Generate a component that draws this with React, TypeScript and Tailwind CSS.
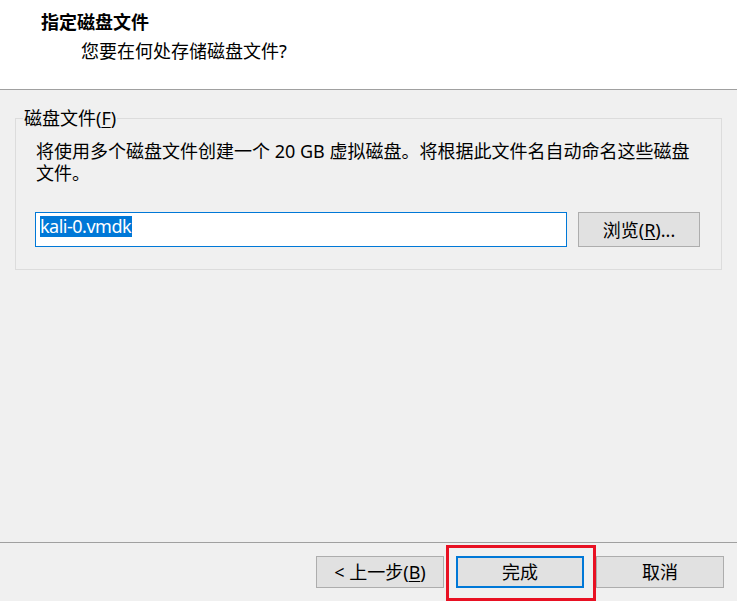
const FONT = "font-['Noto_Sans','Noto_Sans_CJK_SC',sans-serif]"

function Btn({ children, primary = false }: { children: React.ReactNode; primary?: boolean }) {
  return (
    <div
      className={
        'w-[128px] h-[32px] flex items-center justify-center bg-[#e1e1e1] text-[18px] leading-[22px] text-black ' +
        (primary ? 'border-2 border-[#0078d7]' : 'border border-[#adadad]')
      }
    >
      {children}
    </div>
  )
}

export default function App() {
  return (
    <div className={`relative w-[737px] h-[601px] overflow-hidden bg-[#f0f0f0] flex flex-col ${FONT} text-black`}>
      {/* Header */}
      <div className="h-[90px] shrink-0 bg-white border-b border-[#a0a0a0] pt-[10px]">
        <div className="pl-[41px] text-[18px] leading-[24px] font-bold">指定磁盘文件</div>
        <div className="pl-[81px] mt-[5px] text-[18px] leading-[24px]">您要在何处存储磁盘文件?</div>
      </div>

      {/* Group box */}
      <fieldset className="mx-[15px] mt-[17px] border border-[#dcdcdc] p-0">
        <legend className="ml-[7px] px-[1px] text-[18px] leading-[22px]">
          磁盘文件(<span className="underline underline-offset-2">F</span>)
        </legend>
        <div className="pl-[19px] pr-[20px] pt-[11px] pb-[22px]">
          <p className="text-[18px] leading-[22px] pl-[1px]">
            将使用多个磁盘文件创建一个 20 GB 虚拟磁盘。将根据此文件名自动命名这些磁盘
            <br />
            文件。
          </p>
          <div className="mt-[28px] flex gap-[11px]">
            <div className="w-[532px] h-[35px] bg-white border border-[#0078d7] pl-[4px] pt-[3px] flex items-start">
              <span className="bg-[#0078d7] text-white text-[18px] tracking-[-0.5px] leading-[21px] h-[21px] pr-[1px]">
                kali-0.vmdk
              </span>
            </div>
            <div className="w-[122px] h-[35px] bg-[#e1e1e1] border border-[#adadad] flex items-center justify-center text-[18px] leading-[22px]">
              浏览(<span className="underline underline-offset-2">R</span>)...
            </div>
          </div>
        </div>
      </fieldset>

      <div className="flex-1" />

      {/* Footer */}
      <div className="h-[59px] shrink-0 border-t border-[#a0a0a0] pt-[13px] pr-[13px] flex justify-end gap-[12px]">
        <Btn>
          &lt; 上一步(<span className="underline underline-offset-2">B</span>)
        </Btn>
        <Btn primary>完成</Btn>
        <Btn>取消</Btn>
      </div>

      {/* Red annotation box */}
      <div className="absolute left-[446px] top-[545px] w-[150px] h-[56px] border-[3px] border-[#e81123]" />
    </div>
  )
}
